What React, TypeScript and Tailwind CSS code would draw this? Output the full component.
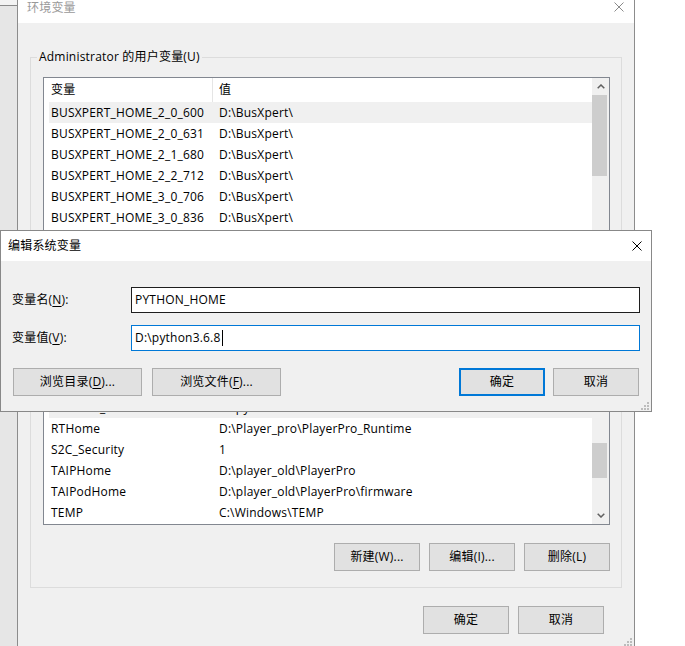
import React from "react";

const FONT = "font-['Open_Sans','Noto_Sans_CJK_SC',sans-serif] tracking-[0.2px]";

type Row = [string, string];

const userRows: Row[] = [
  ["BUSXPERT_HOME_2_0_600", "D:\\BusXpert\\"],
  ["BUSXPERT_HOME_2_0_631", "D:\\BusXpert\\"],
  ["BUSXPERT_HOME_2_1_680", "D:\\BusXpert\\"],
  ["BUSXPERT_HOME_2_2_712", "D:\\BusXpert\\"],
  ["BUSXPERT_HOME_3_0_706", "D:\\BusXpert\\"],
  ["BUSXPERT_HOME_3_0_836", "D:\\BusXpert\\"],
];

const sysRows: Row[] = [
  ["PYTHON_HOME", "D:\\python3.6.8"],
  ["RTHome", "D:\\Player_pro\\PlayerPro_Runtime"],
  ["S2C_Security", "1"],
  ["TAIPHome", "D:\\player_old\\PlayerPro"],
  ["TAIPodHome", "D:\\player_old\\PlayerPro\\firmware"],
  ["TEMP", "C:\\Windows\\TEMP"],
];

function CloseX({ color }: { color: string }) {
  return (
    <svg width="10" height="10" viewBox="0 0 10 10" className="block">
      <path d="M0.5 0.5 L9.5 9.5 M9.5 0.5 L0.5 9.5" stroke={color} strokeWidth="1" fill="none" />
    </svg>
  );
}

function Chevron({ dir }: { dir: "up" | "down" }) {
  return (
    <svg width="8" height="5" viewBox="0 0 8 5" className="block">
      <path
        d={dir === "up" ? "M0.7 4.3 L4 1.0 L7.3 4.3" : "M0.7 0.7 L4 4.0 L7.3 0.7"}
        stroke="#606060"
        strokeWidth="1.5"
        fill="none"
      />
    </svg>
  );
}

function Grip() {
  return (
    <svg width="8" height="8" viewBox="0 0 8 8" className="block">
      <rect x="6" y="0" width="2" height="2" fill="#bcbcbc" />
      <rect x="3" y="3" width="2" height="2" fill="#bcbcbc" />
      <rect x="6" y="3" width="2" height="2" fill="#bcbcbc" />
      <rect x="0" y="6" width="2" height="2" fill="#bcbcbc" />
      <rect x="3" y="6" width="2" height="2" fill="#bcbcbc" />
      <rect x="6" y="6" width="2" height="2" fill="#bcbcbc" />
    </svg>
  );
}

function Btn({
  children,
  width,
  primary,
}: {
  children?: React.ReactNode;
  width: string;
  primary?: boolean;
}) {
  return (
    <div
      className={
        "h-[28px] flex items-center justify-center bg-[#e1e1e1] text-[12px] leading-[16px] text-black " +
        width +
        (primary ? " border-2 border-[#0078d7]" : " border border-[#adadad]")
      }
    >
      {children}
    </div>
  );
}

function U({ children }: { children: React.ReactNode }) {
  return <span className="underline underline-offset-[2px]">{children}</span>;
}

function ListBox({
  rows,
  height,
  bottomAligned,
  selected,
  thumb,
  showHeader,
}: {
  rows: Row[];
  height: string;
  bottomAligned?: boolean;
  selected: number;
  thumb: "top" | "bottom";
  showHeader?: boolean;
}) {
  return (
    <div className={"flex border border-[#828790] bg-white " + height}>
      <div className="flex-1 min-w-0 flex flex-col pl-[5px]">
        <div className="h-[24px] flex items-stretch shrink-0">
          <div className="w-[163px] flex items-center pl-[2px] text-[12px] text-black">
            {showHeader ? "变量" : null}
          </div>
          <div className="w-[1px] bg-[#e5e5e5]" />
          <div className="flex-1 flex items-center pl-[6px] text-[12px] text-black">
            {showHeader ? "值" : null}
          </div>
        </div>
        <div
          className={
            "flex-1 min-h-0 overflow-hidden flex flex-col " +
            (bottomAligned ? "justify-end pb-[1px]" : "justify-start")
          }
        >
          {rows.map((r, i) => (
            <div
              key={i}
              className={
                "h-[21px] shrink-0 flex items-center text-[12px] text-black whitespace-nowrap " +
                (i === selected ? "bg-[#f0f0f0]" : "bg-white")
              }
            >
              <div className="w-[164px] pl-[2px] overflow-hidden">{r[0]}</div>
              <div className="flex-1 pl-[6px] overflow-hidden">{r[1]}</div>
            </div>
          ))}
        </div>
      </div>
      <div className="w-[17px] flex flex-col bg-[#f0f0f0]">
        <div className="h-[17px] flex items-center justify-center shrink-0">
          <Chevron dir="up" />
        </div>
        <div
          className={
            "flex-1 flex flex-col pr-[2px] " + (thumb === "top" ? "justify-start" : "justify-end")
          }
        >
          {thumb === "top" ? (
            <div className="h-[81px] bg-[#cdcdcd]" />
          ) : (
            <div className="h-[35px] mb-[29px] bg-[#cdcdcd]" />
          )}
        </div>
        <div className="h-[17px] flex items-center justify-center shrink-0">
          <Chevron dir="down" />
        </div>
      </div>
    </div>
  );
}

function GroupBox({
  label,
  children,
  className,
}: {
  label?: string;
  children: React.ReactNode;
  className?: string;
}) {
  return (
    <fieldset
      className={
        "mx-[12px] border border-[#dcdcdc] pl-[12px] pr-[11px] pt-[12px] pb-[16px] " + (className ?? "")
      }
    >
      <legend className="ml-[-6px] px-[2px] h-[16px] text-[12px] leading-[16px] text-black">{label}</legend>
      {children}
    </fieldset>
  );
}

export default function App() {
  return (
    <div className={"relative w-[685px] h-[646px] bg-white overflow-hidden flex " + FONT}>
      {/* window behind, left strip */}
      <div className="w-[17px] h-full flex flex-col">
        <div className="h-[5px] bg-[#f3f3f3]" />
        <div className="h-[1px] bg-[#8a8a8a]" />
        <div className="flex-1 bg-[#e6e6e6]" />
      </div>

      {/* 环境变量 window */}
      <div className="w-[618px] h-full border-x border-[#8c8c8c] bg-[#f0f0f0] flex flex-col">
        <div className="h-[23px] bg-white flex justify-between pl-[9px] pr-[10px] shrink-0">
          <div className="text-[12px] leading-[16px] text-[#999999]">环境变量</div>
          <div className="mt-[2px]">
            <CloseX color="#8a8a8a" />
          </div>
        </div>

        <div className="pt-[26px] flex flex-col">
          <GroupBox label="Administrator 的用户变量(U)">
            <ListBox rows={userRows} height="h-[173px]" selected={0} thumb="top" showHeader />
            <div className="mt-[18px] flex justify-end gap-[9px]">
              <Btn width="w-[86px]" />
              <Btn width="w-[86px]" />
              <Btn width="w-[86px]" />
            </div>
          </GroupBox>

          <GroupBox className="mt-[9px]">
            <ListBox rows={sysRows} height="h-[175px]" bottomAligned selected={0} thumb="bottom" />
            <div className="mt-[18px] flex justify-end gap-[9px]">
              <Btn width="w-[86px]">新建(W)...</Btn>
              <Btn width="w-[86px]">编辑(I)...</Btn>
              <Btn width="w-[86px]">删除(L)</Btn>
            </div>
          </GroupBox>

          <div className="mt-[18px] flex justify-end gap-[9px] pr-[30px]">
            <Btn width="w-[86px]">确定</Btn>
            <Btn width="w-[86px]">取消</Btn>
          </div>
          <div className="mt-[4px] flex justify-end pr-[2px]">
            <Grip />
          </div>
        </div>
      </div>

      {/* 编辑系统变量 dialog (overlay) */}
      <div className="absolute left-0 top-[230px] w-[652px] h-[182px] border border-[#888888] bg-[#f0f0f0] flex flex-col">
        <div className="h-[30px] bg-white flex items-center justify-between pl-[7px] pr-[9px] shrink-0">
          <div className="text-[12px] leading-[16px] text-black">编辑系统变量</div>
          <CloseX color="#000000" />
        </div>
        <div className="flex flex-col pt-[26px]">
          <div className="flex items-center pl-[11px] pr-[11px]">
            <div className="w-[119px] text-[12px] leading-[16px] text-black">
              变量名(<U>N</U>):
            </div>
            <div className="flex-1 h-[26px] border border-[#1e1e1e] bg-white flex items-center pl-[3px] text-[12px] text-black">
              PYTHON_HOME
            </div>
          </div>
          <div className="mt-[12px] flex items-center pl-[11px] pr-[11px]">
            <div className="w-[119px] text-[12px] leading-[16px] text-black">
              变量值(<U>V</U>):
            </div>
            <div className="flex-1 h-[26px] border border-[#0078d7] bg-white flex items-center pl-[3px] text-[12px] text-black">
              D:\python3.6.8
              <span className="inline-block w-[1px] h-[16px] bg-black ml-[1px]" />
            </div>
          </div>
          <div className="mt-[17px] flex items-center pl-[12px] pr-[12px]">
            <Btn width="w-[129px]">
              浏览目录(<U>D</U>)...
            </Btn>
            <div className="ml-[10px]">
              <Btn width="w-[129px]">
                浏览文件(<U>F</U>)...
              </Btn>
            </div>
            <div className="flex-1" />
            <Btn width="w-[86px]" primary>
              确定
            </Btn>
            <div className="ml-[8px]">
              <Btn width="w-[86px]">取消</Btn>
            </div>
          </div>
          <div className="mt-[6px] flex justify-end pr-[2px]">
            <Grip />
          </div>
        </div>
      </div>
    </div>
  );
}
